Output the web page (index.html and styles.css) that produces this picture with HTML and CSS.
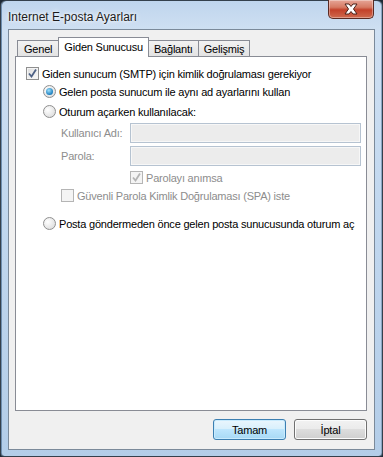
FILE: index.html
```html
<!DOCTYPE html>
<html lang="tr">
<head>
	<meta charset="UTF-8">
	<title>Internet E-posta Ayarları</title>
	<link rel="stylesheet" href="styles.css">
</head>
<body>

<div class="window">
	<div class="titlebar">
		<span class="title">Internet E-posta Ayarları</span>
		<span class="close-btn">
			<svg width="20" height="12" viewBox="0 0 20 12">
				<path d="M4 1 L8 1 L10 3.5 L12 1 L16 1 L12.5 6 L16 11 L12 11 L10 8.5 L8 11 L4 11 L7.5 6 Z" fill="#ffffff" stroke="#4a2018" stroke-width="1" stroke-linejoin="round"/>
			</svg>
		</span>
	</div>

	<div class="client">
		<!-- tab strip -->
		<div class="tabs">
			<span class="tab first">Genel</span>
			<span class="tab selected">Giden Sunucusu</span>
			<span class="tab">Bağlantı</span>
			<span class="tab">Gelişmiş</span>
		</div>

		<div class="panel">
			<label class="row">
				<span class="check">
					<svg width="9" height="9" viewBox="0 0 9 9"><path d="M1 4.5 L3.5 7.5 L8 0.5" fill="none" stroke="#4d6185" stroke-width="1.8"/></svg>
				</span>
				Giden sunucum (SMTP) için kimlik doğrulaması gerekiyor
			</label>

			<div class="group">
				<label class="row opt-same">
					<span class="radio checked"><span class="dot"></span></span>
					Gelen posta sunucum ile aynı ad ayarlarını kullan
				</label>
				<label class="row opt-logon">
					<span class="radio"></span>
					Oturum açarken kullanılacak:
				</label>

				<div class="logon">
					<div class="field">
						<span class="field-label">Kullanıcı Adı:</span>
						<span class="input"></span>
					</div>
					<div class="field">
						<span class="field-label">Parola:</span>
						<span class="input"></span>
					</div>
					<label class="row disabled remember">
						<span class="check">
							<svg width="9" height="9" viewBox="0 0 9 9"><path d="M1 4.5 L3.5 7.5 L8 0.5" fill="none" stroke="#b4b4b4" stroke-width="1.8"/></svg>
						</span>
						Parolayı anımsa
					</label>
					<label class="row disabled spa">
						<span class="check"></span>
						Güvenli Parola Kimlik Doğrulaması (SPA) iste
					</label>
				</div>

				<label class="row">
					<span class="radio"></span>
					Posta göndermeden önce gelen posta sunucusunda oturum aç
				</label>
			</div>
		</div>

		<div class="buttons">
			<span class="btn default">Tamam</span>
			<span class="btn">İptal</span>
		</div>
	</div>
</div>

</body>
</html>
```

FILE: styles.css
```css
body {
	margin: 0;
	font-family: "Liberation Sans", Arial, sans-serif;
	font-size: 11px;
	letter-spacing: -0.2px;
	color: #000;
	background: #1e2a36;
}

.window {
	width: 383px;
	height: 457px;
	box-sizing: border-box;
	border: 1px solid #34404c;
	border-radius: 6px 6px 4px 4px;
	background: linear-gradient(to bottom, #bfd5ed 0px, #cfe0f2 30px, #c2d8ef 200px, #b3cde8 457px);
	box-shadow: inset 1px 0 0 #6f8fb0, inset -1px 0 0 #8aa6c4;
	display: flex;
	flex-direction: column;
}

.titlebar {
	height: 28px;
	display: flex;
	align-items: flex-start;
	padding-left: 7px;
	padding-right: 8px;
	box-sizing: border-box;
}

.title {
	font-size: 12px;
	letter-spacing: 0;
	margin-top: 9px;
	color: #1b1b1b;
	text-shadow: 0 0 6px #ffffff, 0 0 3px #ffffff;
}

.close-btn {
	margin-left: auto;
	margin-top: -1px;
	width: 46px;
	height: 19px;
	box-sizing: border-box;
	border: 1px solid #5b2a22;
	border-top: none;
	border-radius: 0 0 5px 5px;
	background: linear-gradient(to bottom, #e6a597 0%, #d67a64 40%, #c3412a 55%, #cf6a4e 100%);
	box-shadow: inset 0 0 0 1px rgba(255, 255, 255, 0.35);
	display: flex;
	justify-content: center;
	align-items: center;
}

.client {
	flex: 1;
	margin: 0 7px 6px 7px;
	border: 1px solid #7b8a9a;
	background: #f0f0f0;
	display: flex;
	flex-direction: column;
	padding: 7px 7px 0 6px;
}

.tabs {
	display: flex;
	align-items: flex-end;
	padding-left: 2px;
	height: 19px;
	position: relative;
	z-index: 1;
}

.tab {
	height: 16px;
	box-sizing: border-box;
	border: 1px solid #898c95;
	border-bottom: none;
	border-right: none;
	padding: 1px 5px 0 5px;
	background: linear-gradient(to bottom, #f2f2f2, #e3e3e3);
	line-height: 15px;
}

.tab.first {
	padding: 1px 6px 0 6px;
}

.tab:last-child {
	border-right: 1px solid #898c95;
}

.tab.selected {
	height: 20px;
	background: #ffffff;
	border-right: 1px solid #898c95;
	margin-bottom: -1px;
	padding: 2px 5px 0 5px;
}

.tab.selected + .tab {
	border-left: none;
}

.panel {
	height: 355px;
	box-sizing: border-box;
	border: 1px solid #898c95;
	background: #ffffff;
	padding: 10px 0 0 10px;
}

.row {
	display: flex;
	align-items: center;
	height: 13px;
	white-space: nowrap;
}

.check {
	width: 13px;
	height: 13px;
	box-sizing: border-box;
	border: 1px solid #8f8f8f;
	background: linear-gradient(135deg, #dcdcdc, #fbfbfb);
	box-shadow: inset 0 0 0 1px #f4f4f4;
	margin-right: 3px;
	display: flex;
	justify-content: center;
	align-items: center;
	flex-shrink: 0;
}

.group {
	padding-left: 17px;
	padding-top: 5px;
	display: flex;
	flex-direction: column;
}

.opt-same {
	margin-bottom: 7px;
}

.opt-logon {
	margin-bottom: 5px;
}

.radio {
	width: 13px;
	height: 13px;
	box-sizing: border-box;
	border-radius: 50%;
	border: 1px solid #8f8f8f;
	background: radial-gradient(circle at 35% 35%, #ffffff, #d6d6d6);
	margin-right: 3px;
	display: flex;
	justify-content: center;
	align-items: center;
	flex-shrink: 0;
}

.radio .dot {
	width: 7px;
	height: 7px;
	border-radius: 50%;
	background: radial-gradient(circle at 40% 35%, #9fe0fb, #1c7fbf 70%, #0f5a8c);
}

.logon {
	padding-left: 18px;
	display: flex;
	flex-direction: column;
	gap: 3px;
	margin-bottom: 15px;
}

.field {
	display: flex;
	align-items: center;
	height: 20px;
}

.field-label {
	width: 69px;
	color: #8d8d8d;
}

.input {
	width: 231px;
	height: 20px;
	box-sizing: border-box;
	border: 1px solid #b6c3d1;
	background: #ececec;
	box-shadow: inset 0 0 0 1px #f7f7f7;
}

.row.disabled {
	color: #8d8d8d;
}

.row.disabled .check {
	border-color: #b5b5b5;
	background: #f4f4f4;
}

.remember {
	margin-left: 69px;
	margin-top: 2px;
}

.spa {
	margin-top: 2px;
}

.buttons {
	display: flex;
	justify-content: flex-end;
	gap: 8px;
	padding-top: 8px;
}

.btn {
	width: 73px;
	height: 21px;
	box-sizing: border-box;
	border: 1px solid #707070;
	border-radius: 3px;
	background: linear-gradient(to bottom, #f2f2f2 0%, #ebebeb 45%, #dddddd 50%, #cfcfcf 100%);
	box-shadow: inset 0 0 0 1px #fcfcfc;
	display: flex;
	justify-content: center;
	align-items: center;
}

.btn.default {
	border-color: #3c7fb1;
	background: linear-gradient(to bottom, #eaf6fd 0%, #d9f0fc 45%, #bee6fd 50%, #a7d9f5 100%);
	box-shadow: inset 0 0 0 1px #c9ebfd;
}
```
